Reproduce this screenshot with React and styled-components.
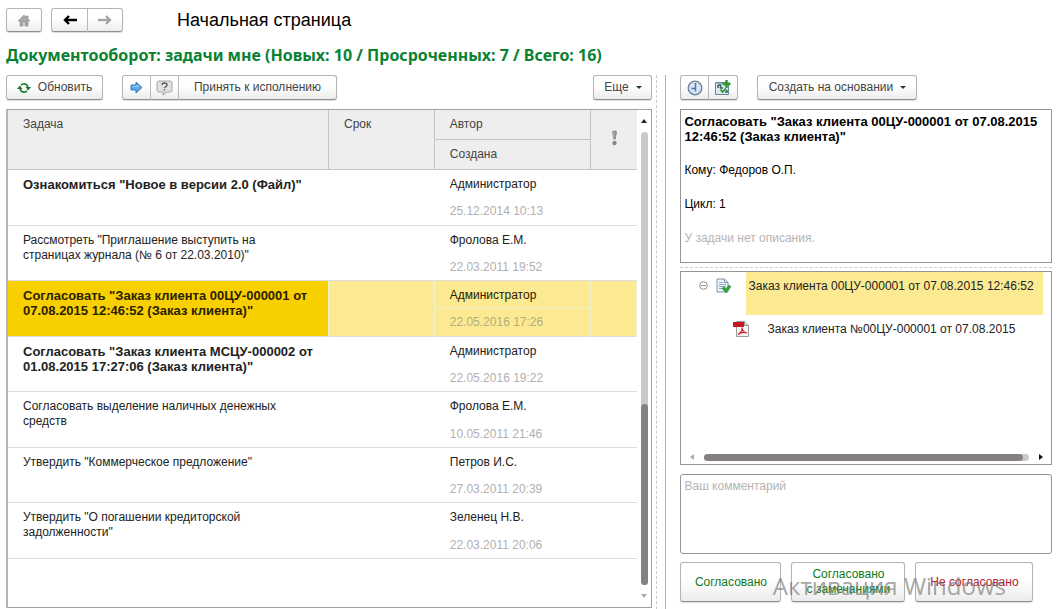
import React from "react";
import styled, { createGlobalStyle, css } from "styled-components";

const GlobalStyle = createGlobalStyle`
  * { box-sizing: border-box; }
  html, body { margin: 0; background: #fff; }
  body, button, textarea, table {
    font-family: "Liberation Sans", Arial, sans-serif;
    font-size: 12px;
    line-height: 15px;
    color: #222;
  }
`;

const Page = styled.div`
  position: relative;
  display: flex;
  flex-direction: column;
  min-height: 100vh;
  padding: 8px 5px 0 6px;
  overflow: hidden;
`;

const TopBar = styled.header`
  display: flex;
  align-items: center;
  height: 24px;
`;

const PageTitle = styled.h1`
  margin: 0 0 0 54px;
  font-size: 18px;
  line-height: 24px;
  font-weight: 400;
  color: #000;
`;

const TasksTitle = styled.h2`
  margin: 13px 0 9px;
  font-family: "Noto Sans", "Open Sans", sans-serif;
  font-size: 16px;
  line-height: 21px;
  font-weight: 700;
  color: #0a8232;
  white-space: nowrap;
`;

const Workspace = styled.main`
  flex: 1;
  display: grid;
  grid-template-columns: minmax(0, 174fr) 28px minmax(0, 100fr);
`;

const Column = styled.section`
  display: flex;
  flex-direction: column;
  min-width: 0;
  padding-bottom: ${(p) => p.$bottom}px;
`;

const Splitter = styled.div`
  display: flex;
  gap: 8px;
  padding-left: 4px;
`;

const SplitterDots = styled.div`
  border-left: 1px dashed #c9c9d6;
`;

const SplitterLine = styled.div`
  border-left: 1px solid #b4b594;
`;

const Toolbar = styled.div`
  display: flex;
  gap: 19px;
  height: 25px;
  margin-bottom: 9px;
`;

const Spacer = styled.div`
  flex: 1;
`;

const buttonFace = css`
  border: 1px solid #b4b4b4;
  border-bottom-color: #8f8f8f;
  border-radius: 3px;
  background: linear-gradient(#fff 45%, #ececec);
  box-shadow: 0 1px 1px #ddd;
`;

const Button = styled.button`
  ${buttonFace}
  display: flex;
  align-items: center;
  justify-content: center;
  gap: 7px;
  width: ${(p) => p.$width}px;
  padding: 0;
  color: #444;
  white-space: nowrap;
`;

const ButtonGroup = styled.div`
  display: flex;
  height: 100%;
  margin-left: ${(p) => p.$indent || 0}px;

  ${Button} + ${Button} { border-left: 0; }
  ${Button}:not(:last-child) { border-top-right-radius: 0; border-bottom-right-radius: 0; }
  ${Button}:not(:first-child) { border-top-left-radius: 0; border-bottom-left-radius: 0; }
`;

const Caret = styled.span`
  border: 3px solid transparent;
  border-top-color: #333;
  border-bottom: 0;
`;

const TableFrame = styled.div`
  flex: 1;
  display: flex;
  border: 1px solid #a0a0a0;
  border-left: 2px solid #b4b4b4;
`;

const TableArea = styled.div`
  flex: 1;
  min-width: 0;
`;

const TaskTable = styled.table`
  width: 100%;
  height: 449px;
  table-layout: fixed;
  border-collapse: separate;
  border-spacing: 0;
`;

const HeadCell = styled.th`
  height: ${(p) => (p.rowSpan === 2 ? 60 : 30)}px;
  padding: 7px 0 0 15px;
  border-bottom: 1px solid #c4c4c4;
  border-right: ${(p) => (p.$last ? 0 : 1)}px solid #c4c4c4;
  background: #eee;
  font-weight: 400;
  text-align: left;
  vertical-align: top;
  color: #444;
`;

const MarkCell = styled(HeadCell)`
  padding: 0;
  text-align: center;
  vertical-align: middle;
`;

const Cell = styled.td`
  padding: 7px 14px 0 15px;
  vertical-align: top;
  border-bottom: 1px solid #dedede;
  font-size: ${(p) => (p.$bold ? 13 : 12)}px;
  font-weight: ${(p) => (p.$bold ? 700 : 400)};
  ${(p) =>
    p.$selected &&
    css`
      background: ${p.$current ? "#f8d000" : "#fbea91"};
      border-right: 1px solid #f3efcf;
      color: #2b2100;
    `}
`;

const AuthorCell = styled(Cell)`
  border-bottom-color: ${(p) => (p.$selected ? "#f3efcf" : "transparent")};
`;

const DateCell = styled(Cell)`
  padding-top: 6px;
  color: ${(p) => (p.$selected ? "#b5ab80" : "#b0b0b0")};
`;

const VScroll = styled.div`
  display: flex;
  flex-direction: column;
  align-items: center;
  width: 14px;
  padding: 9px 0;
`;

const VTrack = styled.div`
  flex: 1;
  display: flex;
  align-items: flex-end;
  width: 7px;
  margin: 9px 0;
  border-radius: 4px;
  background: #cacaca;
`;

const VThumb = styled.div`
  width: 100%;
  height: 40%;
  border-radius: 4px;
  background: #858182;
`;

const Arrow = styled.span`
  border: 3px solid transparent;
  ${(p) =>
    ({
      up: css`border-top: 0; border-bottom: 4px solid ${p.$color};`,
      down: css`border-bottom: 0; border-top: 4px solid ${p.$color};`,
      left: css`border-left: 0; border-right: 4px solid ${p.$color};`,
      right: css`border-right: 0; border-left: 4px solid ${p.$color};`,
    })[p.$to]}
`;

const InfoBox = styled.article`
  height: 154px;
  padding: 4px 3px;
  border: 1px solid #959595;
  color: #000;
`;

const InfoLine = styled.p`
  margin: 0 0 19px;
  font-size: ${(p) => (p.$bold ? 13 : 12)}px;
  font-weight: ${(p) => (p.$bold ? 700 : 400)};
  color: ${(p) => (p.$muted ? "#b4b4b4" : "#000")};
`;

const PaneDivider = styled.div`
  margin: 4px 0 3px;
  border-top: 1px dashed #ccc;
`;

const TreeBox = styled.div`
  flex: 1;
  display: flex;
  flex-direction: column;
  justify-content: space-between;
  min-height: 194px;
  border: 1px solid #959595;
`;

const Tree = styled.ul`
  margin: 0;
  padding: 0;
  list-style: none;
`;

const TreeRow = styled.li`
  display: flex;
  height: 43px;
  padding: 0 8px 0 ${(p) => p.$indent}px;

  > svg { flex: none; margin-top: 6px; }
  > svg + svg { margin-left: 8px; }
`;

const TreeLabel = styled.span`
  flex: 1;
  margin-left: 15px;
  padding: 7px 0 0 2px;
  white-space: nowrap;
  background: ${(p) => (p.$selected ? "#fbea91" : "none")};
`;

const HScroll = styled.div`
  display: flex;
  align-items: center;
  gap: 10px;
  height: 14px;
  padding: 0 8px 0 9px;
`;

const HTrack = styled.div`
  flex: 1;
  height: 7px;
  border-radius: 4px;
  background: #cacaca;
`;

const HThumb = styled.div`
  width: 98%;
  height: 100%;
  border-radius: 4px;
  background: #858182;
`;

const Comment = styled.textarea`
  display: block;
  width: 100%;
  height: 80px;
  margin: 9px 0 8px;
  padding: 4px 3px;
  border: 1px solid #959595;
  border-radius: 3px;
  resize: none;

  &::placeholder { color: #b4b4b4; opacity: 1; }
`;

const Actions = styled.div`
  display: flex;
  gap: 10px;
  height: 40px;
`;

const ActionButton = styled(Button)`
  color: ${(p) => (p.$danger ? "#b3202c" : "#0f7a1b")};
  white-space: pre-line;
`;

const Watermark = styled.div`
  position: absolute;
  right: 51px;
  bottom: 7px;
  font-family: "Open Sans", sans-serif;
  font-size: 24px;
  line-height: 32px;
  color: rgba(110, 110, 110, 0.62);
  pointer-events: none;
`;

const HomeIcon = () => (
  <svg width="14" height="13" viewBox="0 0 14 13">
    <path d="M7 1 1 7h2v5h3V8h2v4h3V7h2L11 5V2H9v1z" fill="#a8a8a8" stroke="#8f8f8f" strokeWidth="0.7" />
  </svg>
);

const ArrowIcon = ({ back }) => (
  <svg width="14" height="10" viewBox="0 0 14 10" fill="none" stroke={back ? "#000" : "#a6a6a6"} strokeWidth="2.4">
    <path d={back ? "M14 5H2M6 1 2 5l4 4" : "M0 5h12M8 1l4 4-4 4"} />
  </svg>
);

const RefreshIcon = () => (
  <svg width="14" height="12" viewBox="0 0 14 12">
    <path d="M4 3.2C6 1 10 1.6 11 5M10 8.8C8 11 4 10.4 3 7" fill="none" stroke="#2c8a3c" strokeWidth="1.8" />
    <path d="M8.4 5H14l-2.8 3.4zM0 7h5.6L2.8 3.6z" fill="#1f7230" />
  </svg>
);

const ForwardIcon = () => (
  <svg width="13" height="13" viewBox="0 0 13 13">
    <path d="M1 4h5V1l6 5.500-6 5.500V9H1z" fill="#5aa9e6" stroke="#3b78b4" />
    <path d="M2 5h5V3.500l2.500 2.500H2z" fill="#9bd0f5" />
  </svg>
);

const QuestionIcon = () => (
  <svg width="17" height="16" viewBox="0 0 17 16">
    <path d="M3 1h11q2 0 2 2v7q0 2-2 2h-3l-4 3v-3H3q-2 0-2-2V3q0-2 2-2z" fill="#dfe1e3" stroke="#a3a7ab" />
    <path d="M6 5q0-2 2.500-2T11 5q0 1-1.200 1.700T8.500 8.200" fill="none" stroke="#555" strokeWidth="1.300" />
    <path d="M7.800 9.200h1.400v1.400H7.800z" fill="#555" />
  </svg>
);

const ClockIcon = () => (
  <svg width="16" height="16" viewBox="0 0 16 16">
    <circle cx="8" cy="8" r="6.800" fill="#dce9f8" stroke="#6d7f95" strokeWidth="1.300" />
    <circle cx="8" cy="8" r="5" fill="none" stroke="#9dbbe0" strokeDasharray="1 1.600" />
    <path d="M8.500 3v5.500H4.500M8.500 8.500v3" fill="none" stroke="#4a74b0" strokeWidth="1.500" />
  </svg>
);

const ProcessIcon = () => (
  <svg width="16" height="16" viewBox="0 0 16 16">
    <path d="M.5 2.500h13v12H.5z" fill="#dfeaf0" stroke="#6b8796" />
    <path d="M1 3h12" stroke="#6b8796" />
    <path d="M3 5h2.500v3H8M3 5v3M10 12h2v-2" fill="none" stroke="#3b6660" strokeWidth="1.600" />
    <path d="M11.500 0v8M7.500 4h8" stroke="#2a9a2a" strokeWidth="2.400" />
    <path d="m5.500 9.500 2 2.500 3.500-3.500" fill="none" stroke="#2a9a2a" strokeWidth="1.800" />
  </svg>
);

const ImportanceIcon = () => (
  <svg width="7" height="16" viewBox="0 0 7 16">
    <path d="M1 2q0-1.500 2.500-1.500T6 2L4.500 9.500h-2z" fill="#8c8c8c" />
    <path d="M3 2v5" stroke="#ccc" />
    <circle cx="3.500" cy="13" r="2.200" fill="#858585" />
  </svg>
);

const CollapseIcon = () => (
  <svg width="9" height="16" viewBox="0 0 9 16" fill="none" stroke="#8f8f8f">
    <circle cx="4.500" cy="7.500" r="3.800" />
    <path d="M2 7.500h5" />
  </svg>
);

const DocumentIcon = () => (
  <svg width="15" height="16" viewBox="0 0 15 16">
    <path d="M1 1h7.500L12 4.500V14H1z" fill="#edf4fa" stroke="#7b95ac" />
    <path d="M8.500 1v3.500H12" fill="none" stroke="#7b95ac" />
    <path d="M3 4.500h4M3 6.500h7M3 8.500h7M3 10.500h4" stroke="#8eabc4" />
    <path d="M6 10.500 8 8.800l2 2L13 7l2 1.800-5 6z" fill="#35a835" stroke="#1e7a22" strokeWidth="0.500" />
  </svg>
);

const PdfIcon = () => (
  <svg width="17" height="16" viewBox="0 0 17 16">
    <path d="M3.500.5h8l4 4v11h-12z" fill="#f6f6f6" stroke="#9a9a9a" />
    <path d="M11.500.5v4h4" fill="#ddd" stroke="#9a9a9a" />
    <path d="M0 1h11v5H0z" fill="#c9171e" />
    <path d="M5 13.500c3-1.500 4.500-5 4-7 0 3 2.500 5.500 5 5.500-2.500-1-6-.5-9 1.500z" fill="none" stroke="#d2232a" strokeWidth="1.200" />
  </svg>
);

const tasks = [
  { title: 'Ознакомиться "Новое в версии 2.0 (Файл)"', author: "Администратор", date: "25.12.2014 10:13", bold: true },
  { title: 'Рассмотреть "Приглашение выступить на страницах журнала (№ 6 от 22.03.2010)"', author: "Фролова Е.М.", date: "22.03.2011 19:52" },
  { title: 'Согласовать "Заказ клиента 00ЦУ-000001 от 07.08.2015 12:46:52 (Заказ клиента)"', author: "Администратор", date: "22.05.2016 17:26", bold: true, selected: true },
  { title: 'Согласовать "Заказ клиента МСЦУ-000002 от 01.08.2015 17:27:06 (Заказ клиента)"', author: "Администратор", date: "22.05.2016 19:22", bold: true },
  { title: "Согласовать выделение наличных денежных средств", author: "Фролова Е.М.", date: "10.05.2011 21:46" },
  { title: 'Утвердить "Коммерческое предложение"', author: "Петров И.С.", date: "27.03.2011 20:39" },
  { title: 'Утвердить "О погашении кредиторской задолженности"', author: "Зеленец Н.В.", date: "22.03.2011 20:06" },
];

const TaskRows = ({ title, author, date, bold, selected }) => (
  <>
    <tr>
      <Cell rowSpan={2} $bold={bold} $selected={selected} $current>{title}</Cell>
      <Cell rowSpan={2} $selected={selected} />
      <AuthorCell $selected={selected}>{author}</AuthorCell>
      <Cell rowSpan={2} $selected={selected} />
    </tr>
    <tr>
      <DateCell $selected={selected}>{date}</DateCell>
    </tr>
  </>
);

export default function App() {
  return (
    <>
      <GlobalStyle />
      <Page>
        <TopBar>
          <ButtonGroup>
            <Button $width={36} aria-label="Домой"><HomeIcon /></Button>
          </ButtonGroup>
          <ButtonGroup $indent={9}>
            <Button $width={37} aria-label="Назад"><ArrowIcon back /></Button>
            <Button $width={35} aria-label="Вперед"><ArrowIcon /></Button>
          </ButtonGroup>
          <PageTitle>Начальная страница</PageTitle>
        </TopBar>
        <TasksTitle>Документооборот: задачи мне (Новых: 10 / Просроченных: 7 / Всего: 16)</TasksTitle>
        <Workspace>
          <Column $bottom={1}>
            <Toolbar>
              <Button $width={97}><RefreshIcon />Обновить</Button>
              <ButtonGroup>
                <Button $width={29} aria-label="Перенаправить"><ForwardIcon /></Button>
                <Button $width={28} aria-label="Задать вопрос"><QuestionIcon /></Button>
                <Button $width={158}>Принять к исполнению</Button>
              </ButtonGroup>
              <Spacer />
              <Button $width={59}>Еще<Caret /></Button>
            </Toolbar>
            <TableFrame>
              <TableArea>
                <TaskTable>
                  <colgroup>
                    <col style={{ width: "51%" }} />
                    <col style={{ width: "16.8%" }} />
                    <col style={{ width: "24.9%" }} />
                    <col />
                  </colgroup>
                  <thead>
                    <tr>
                      <HeadCell rowSpan={2}>Задача</HeadCell>
                      <HeadCell rowSpan={2}>Срок</HeadCell>
                      <HeadCell>Автор</HeadCell>
                      <MarkCell rowSpan={2} $last aria-label="Важность"><ImportanceIcon /></MarkCell>
                    </tr>
                    <tr>
                      <HeadCell>Создана</HeadCell>
                    </tr>
                  </thead>
                  <tbody>
                    {tasks.map((task) => <TaskRows key={task.date} {...task} />)}
                  </tbody>
                </TaskTable>
              </TableArea>
              <VScroll>
                <Arrow $to="up" $color="#222" />
                <VTrack><VThumb /></VTrack>
                <Arrow $to="down" $color="#aaa" />
              </VScroll>
            </TableFrame>
          </Column>
          <Splitter>
            <SplitterDots />
            <SplitterLine />
          </Splitter>
          <Column $bottom={7}>
            <Toolbar>
              <ButtonGroup>
                <Button $width={29} aria-label="История"><ClockIcon /></Button>
                <Button $width={29} aria-label="Создать процесс"><ProcessIcon /></Button>
              </ButtonGroup>
              <Button $width={160}>Создать на основании<Caret /></Button>
            </Toolbar>
            <InfoBox>
              <InfoLine $bold>Согласовать "Заказ клиента 00ЦУ-000001 от 07.08.2015 12:46:52 (Заказ клиента)"</InfoLine>
              <InfoLine>Кому: Федоров О.П.</InfoLine>
              <InfoLine>Цикл: 1</InfoLine>
              <InfoLine $muted>У задачи нет описания.</InfoLine>
            </InfoBox>
            <PaneDivider />
            <TreeBox>
              <Tree>
                <TreeRow $indent={18}>
                  <CollapseIcon />
                  <DocumentIcon />
                  <TreeLabel $selected>Заказ клиента 00ЦУ-000001 от 07.08.2015 12:46:52</TreeLabel>
                </TreeRow>
                <TreeRow $indent={52}>
                  <PdfIcon />
                  <TreeLabel>Заказ клиента №00ЦУ-000001 от 07.08.2015</TreeLabel>
                </TreeRow>
              </Tree>
              <HScroll>
                <Arrow $to="left" $color="#aaa" />
                <HTrack><HThumb /></HTrack>
                <Arrow $to="right" $color="#111" />
              </HScroll>
            </TreeBox>
            <Comment placeholder="Ваш комментарий" aria-label="Ваш комментарий" />
            <Actions>
              <ActionButton $width={101}>Согласовано</ActionButton>
              <ActionButton $width={114}>{"Согласовано\nс замечаниями"}</ActionButton>
              <ActionButton $width={118} $danger>Не согласовано</ActionButton>
            </Actions>
          </Column>
        </Workspace>
        <Watermark>Активация Windows</Watermark>
      </Page>
    </>
  );
}
